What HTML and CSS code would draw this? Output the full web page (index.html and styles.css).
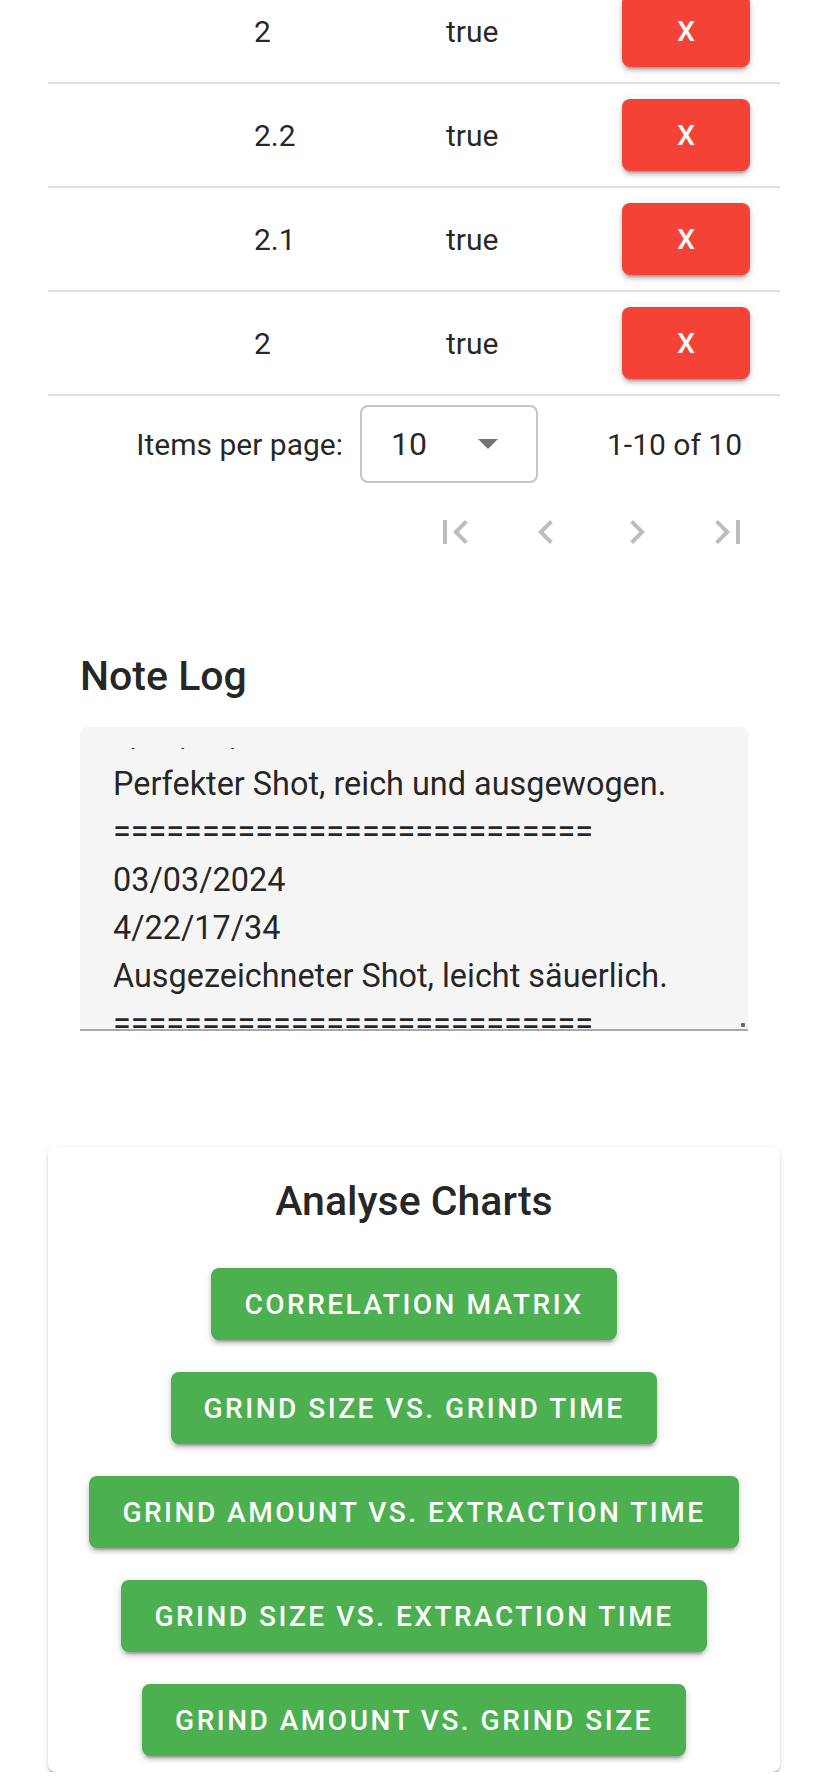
FILE: index.html
```html
<!DOCTYPE html>
<html lang="de">
<head>
<meta charset="utf-8">
<title>Shots</title>
<link rel="stylesheet" href="styles.css">
</head>
<body>
<div class="page">
  <div class="table">
    <div class="row"><div class="cell"></div><div class="cell">2</div><div class="cell">true</div><div class="cell btn-cell"><button class="btn-del">X</button></div></div>
    <div class="row"><div class="cell"></div><div class="cell">2.2</div><div class="cell">true</div><div class="cell btn-cell"><button class="btn-del">X</button></div></div>
    <div class="row"><div class="cell"></div><div class="cell">2.1</div><div class="cell">true</div><div class="cell btn-cell"><button class="btn-del">X</button></div></div>
    <div class="row"><div class="cell"></div><div class="cell">2</div><div class="cell">true</div><div class="cell btn-cell"><button class="btn-del">X</button></div></div>
  </div>

  <div class="paginator">
    <div class="pag-row">
      <span class="pag-label">Items per page:</span>
      <div class="pag-select">
        <span class="pag-value">10</span>
        <span class="pag-arrow"></span>
      </div>
      <span class="pag-range">1-10 of 10</span>
    </div>
    <div class="pag-actions">
      <button class="icon-btn" aria-label="First page"><svg viewBox="0 0 24 24" width="48" height="48"><path d="M18.41 16.59L13.82 12l4.59-4.59L17 6l-6 6 6 6zM6 6h2v12H6z"/></svg></button>
      <button class="icon-btn" aria-label="Previous page"><svg viewBox="0 0 24 24" width="48" height="48"><path d="M15.41 7.41L14 6l-6 6 6 6 1.41-1.41L10.83 12z"/></svg></button>
      <button class="icon-btn" aria-label="Next page"><svg viewBox="0 0 24 24" width="48" height="48"><path d="M10 6L8.59 7.41 13.17 12l-4.58 4.59L10 18l6-6z"/></svg></button>
      <button class="icon-btn" aria-label="Last page"><svg viewBox="0 0 24 24" width="48" height="48"><path d="M5.59 7.41L10.18 12l-4.59 4.59L7 18l6-6-6-6zM16 6h2v12h-2z"/></svg></button>
    </div>
  </div>

  <section class="notes">
    <h2 class="title">Note Log</h2>
    <div class="note-box">
      <div class="note-scroll">
        <div class="note-text">4/22/18/32
Perfekter Shot, reich und ausgewogen.
===========================
03/03/2024
4/22/17/34
Ausgezeichneter Shot, leicht säuerlich.
===========================
02/03/2024</div>
      </div>
      <span class="resize-dot"></span>
    </div>
  </section>

  <section class="card">
    <h2 class="title card-title">Analyse Charts</h2>
    <div class="chart-buttons">
      <button class="btn-chart">Correlation Matrix</button>
      <button class="btn-chart">Grind Size vs. Grind Time</button>
      <button class="btn-chart">Grind Amount vs. Extraction Time</button>
      <button class="btn-chart">Grind Size vs. Extraction Time</button>
      <button class="btn-chart">Grind Amount vs. Grind Size</button>
    </div>
  </section>
</div>
</body>
</html>
```

FILE: styles.css
```css
* { box-sizing: border-box; }

html, body {
  margin: 0;
  padding: 0;
  background: #ffffff;
}

body {
  font-family: Roboto, "Noto Sans", Arial, sans-serif;
  color: rgba(0, 0, 0, 0.87);
  overflow: hidden;
}

.page {
  padding: 0 48px;
}

/* ---------- table ---------- */
.table {
  margin-top: -20px;
}

.row {
  display: grid;
  grid-template-columns: 174px 192px 178px 188px;
  height: 104px;
  border-bottom: 2px solid #e0e0e0;
  align-items: center;
  font-size: 30px;
}

.cell {
  padding-left: 32px;
}

.btn-cell {
  padding-left: 0;
  display: flex;
  justify-content: center;
}

.btn-del {
  min-width: 128px;
  height: 72px;
  border: none;
  border-radius: 8px;
  background: #f44336;
  color: #ffffff;
  font-family: Roboto, sans-serif;
  font-size: 28px;
  font-weight: 500;
  box-shadow: 0 6px 2px -4px rgba(0,0,0,.2), 0 4px 4px 0 rgba(0,0,0,.14), 0 2px 10px 0 rgba(0,0,0,.12);
}

/* ---------- paginator ---------- */
.pag-row {
  display: flex;
  justify-content: flex-end;
  align-items: center;
  height: 96px;
  padding-right: 38px;
  font-size: 30px;
}

.pag-select {
  margin-left: 17px;
  width: 178px;
  height: 78px;
  border: 2px solid #c6c6c6;
  border-radius: 8px;
  display: flex;
  align-items: center;
  justify-content: space-between;
  padding: 0 38px 0 29px;
}

.pag-value {
  font-size: 32px;
}

.pag-arrow {
  width: 0;
  height: 0;
  border-left: 10px solid transparent;
  border-right: 10px solid transparent;
  border-top: 10px solid #757575;
}

.pag-range {
  margin-left: 69px;
}

.pag-actions {
  display: flex;
  justify-content: flex-end;
  gap: 11px;
  height: 80px;
  padding-right: 12px;
}

.icon-btn {
  width: 80px;
  height: 80px;
  border: none;
  background: transparent;
  padding: 0;
  display: flex;
  align-items: center;
  justify-content: center;
}

.icon-btn svg {
  fill: #bdbdbd;
}

/* ---------- notes ---------- */
.notes {
  padding: 72px 32px 0;
}

.title {
  margin: 0;
  font-size: 41px;
  line-height: 64px;
  font-weight: 500;
  color: rgba(0, 0, 0, 0.87);
}

.note-box {
  margin-top: 19px;
  background: #f5f5f5;
  border-radius: 8px 8px 0 0;
  border-bottom: 2px solid #a8a8a8;
  padding-top: 21px;
  display: flex;
  align-items: flex-end;
}

.note-scroll {
  flex: 1;
  height: 281px;
  overflow: hidden;
  padding-left: 33px;
}

.note-text {
  margin-top: -36px;
  white-space: pre;
  font-size: 32.4px;
  line-height: 48px;
  color: rgba(0, 0, 0, 0.87);
}

.resize-dot {
  width: 4px;
  height: 4px;
  margin: 0 3px 2px 0;
  background: #666;
  border-radius: 1px;
}

/* ---------- card ---------- */
.card {
  margin-top: 116px;
  background: #ffffff;
  border-radius: 8px;
  box-shadow: 0 4px 2px -2px rgba(0,0,0,.2), 0 2px 2px 0 rgba(0,0,0,.14), 0 2px 6px 0 rgba(0,0,0,.12);
  padding: 22px 16px 16px;
}

.card-title {
  text-align: center;
}

.chart-buttons {
  margin-top: 35px;
  display: flex;
  flex-direction: column;
  align-items: center;
  gap: 32px;
}

.btn-chart {
  height: 72px;
  padding: 0 33px;
  border: none;
  border-radius: 8px;
  background: #4caf50;
  color: #ffffff;
  font-family: Roboto, sans-serif;
  font-size: 28px;
  font-weight: 500;
  letter-spacing: 2.5px;
  text-transform: uppercase;
  box-shadow: 0 6px 2px -4px rgba(0,0,0,.2), 0 4px 4px 0 rgba(0,0,0,.14), 0 2px 10px 0 rgba(0,0,0,.12);
}
```
